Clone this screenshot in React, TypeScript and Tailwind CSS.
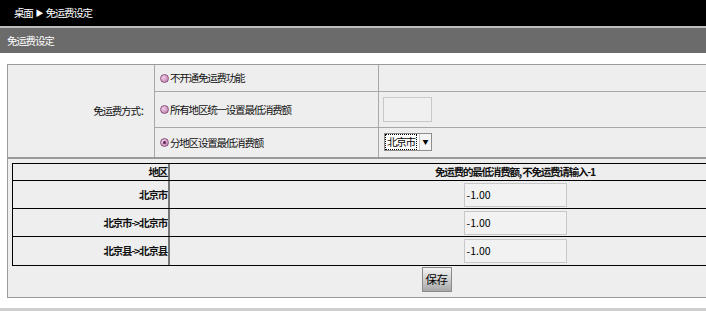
const font = "font-['SimSun','Noto_Sans_CJK_SC',sans-serif]"

function Radio({ checked }: { checked?: boolean }) {
  return (
    <span className="relative inline-block shrink-0 w-[9px] h-[9px] rounded-full border border-[#8a5580] bg-[radial-gradient(circle_at_35%_35%,#f2cfe8,#b674a6)] mr-[1px]">
      {checked && (
        <span className="absolute left-[2px] top-[2px] w-[3px] h-[3px] rounded-full bg-[#5a1f4e]" />
      )}
    </span>
  )
}

const rows = [
  { name: '北京市', value: '-1.00' },
  { name: '北京市->北京市', value: '-1.00' },
  { name: '北京县->北京县', value: '-1.00' },
]

export default function App() {
  return (
    <div className={`w-[706px] h-[311px] overflow-hidden bg-white text-[10.5px] tracking-[-1.2px] text-[#111] ${font}`}>
      <div className="w-[880px]">
        <div className="h-[26px] bg-black text-white flex items-center pl-[14px] gap-[3px]">
          <span>桌面</span>
          <span className="text-[8px]">▶</span>
          <span>免运费设定</span>
        </div>
        <div className="h-[2px] bg-[#bdbdbd]" />
        <div className="h-[25px] bg-[#6b6b6b] text-white flex items-center pl-[7px]">免运费设定</div>

        <div className="mt-[11px] ml-[7px] w-[859px] border border-[#9a9a9a] bg-[#eeeeee]">
          <div className="grid grid-cols-[147px_224px_1fr] border-b-2 border-[#9a9a9a]">
            <div className="row-span-3 border-r border-[#a8a8a8] flex items-center justify-end pr-[5px]">
              免运费方式：
            </div>
            <div className="h-[27px] border-b border-r border-[#a8a8a8] flex items-center pl-[5px]">
              <Radio />不开通免运费功能
            </div>
            <div className="h-[27px] border-b border-[#a8a8a8]" />
            <div className="h-[36px] border-b border-r border-[#a8a8a8] flex items-center pl-[5px]">
              <Radio />所有地区统一设置最低消费额
            </div>
            <div className="h-[36px] border-b border-[#a8a8a8] flex items-center pl-[4px]">
              <div className="w-[49px] h-[25px] border border-[#c8c8c8] bg-[#f0f0f0]" />
            </div>
            <div className="h-[29px] border-r border-[#a8a8a8] flex items-center pl-[5px]">
              <Radio checked />分地区设置最低消费额
            </div>
            <div className="h-[29px] flex items-center pl-[5px] pb-[2px]">
              <div className="w-[48px] h-[18px] border border-[#8e8e8e] bg-white flex items-center overflow-hidden">
                <span className="shrink-0 whitespace-nowrap leading-[14px] px-[1px] border border-dotted border-black text-black">北京市</span>
                <span className="ml-auto shrink-0 w-[12px] h-[16px] border-l border-[#c8c8c8] bg-[#f4f4f4] flex items-center justify-center text-[6px] tracking-normal text-black">▼</span>
              </div>
            </div>
          </div>

          <div className="mx-[4px] mt-[4px] border border-black">
            <div className="grid grid-cols-[157px_1fr] h-[17px] border-b border-black font-bold">
              <div className="border-r-2 border-[#777] flex items-center justify-end pr-[1px]">地区</div>
              <div className="flex items-center justify-center">免运费的最低消费额, 不免运费请输入-1</div>
            </div>
            {rows.map((r, i) => (
              <div
                key={r.name}
                className={`grid grid-cols-[157px_1fr] h-[28px] ${i < rows.length - 1 ? 'border-b border-black' : ''}`}
              >
                <div className="border-r-2 border-[#777] flex items-center justify-end pr-[1px] font-bold">{r.name}</div>
                <div className="flex items-center justify-center">
                  <div className="w-[103px] h-[24px] border border-[#c8c8c8] bg-[#f2f2f2] flex items-center pl-[2px] tracking-normal text-black">
                    {r.value}
                  </div>
                </div>
              </div>
            ))}
          </div>

          <div className="flex justify-center pt-[1px] pb-[5px]">
            <button className="w-[30px] h-[25px] border border-[#8a8a8a] bg-[linear-gradient(#f4f4f4,#a8a8a8)] text-black text-[11.5px] tracking-[-0.5px]">
              保存
            </button>
          </div>
        </div>

        <div className="mt-[10px] h-[6px] bg-[#cfcfcf]" />
      </div>
    </div>
  )
}
